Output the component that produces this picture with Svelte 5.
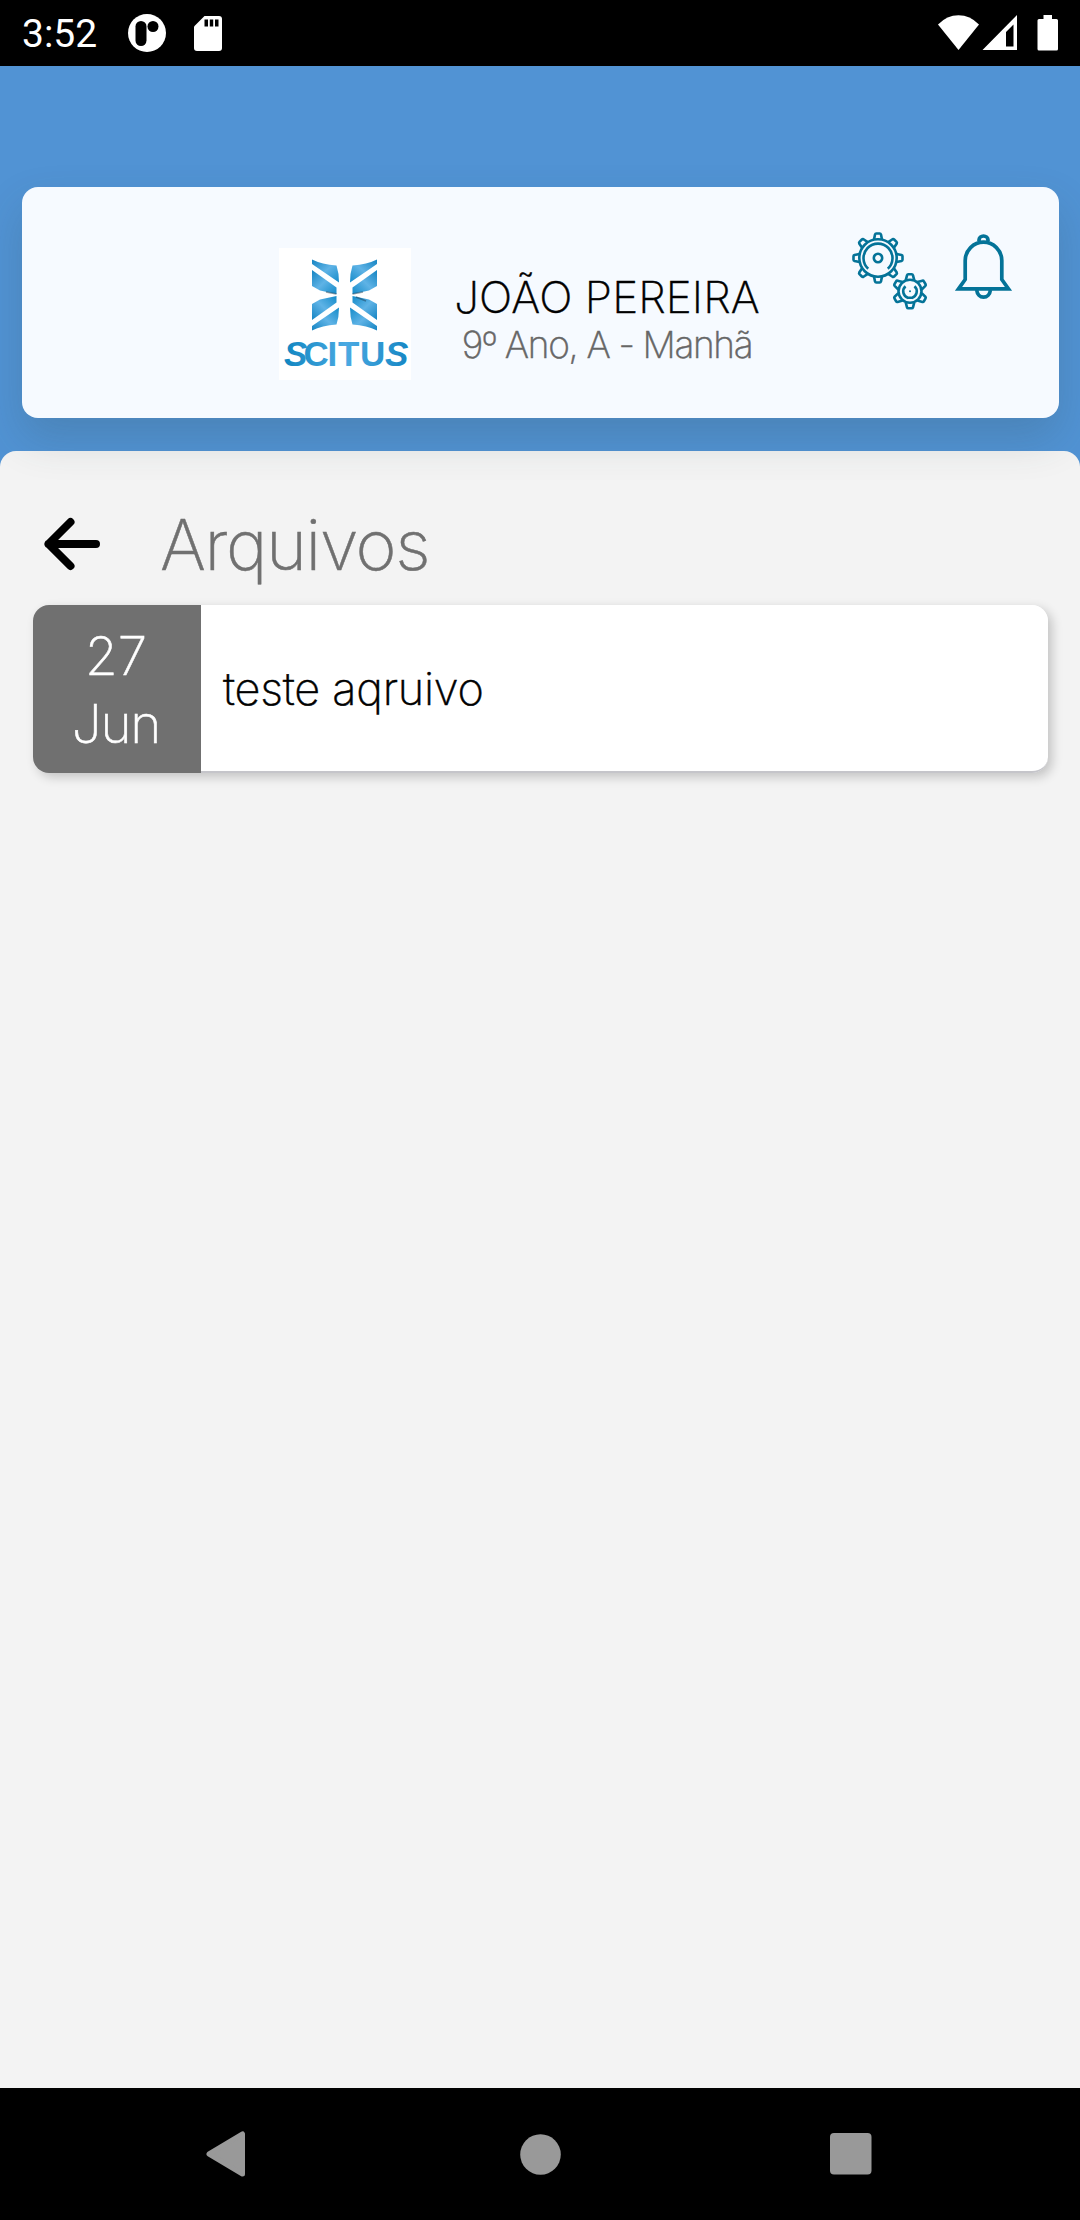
<script>
  const student = { name: 'JOÃO PEREIRA', group: '9º Ano, A - Manhã' };
  const files = [{ day: '27', month: 'Jun', title: 'teste aqruivo' }];
  const bigTeeth = [0, 45, 90, 135, 180, 225, 270, 315];
  const smallTeeth = [0, 60, 120, 180, 240, 300];
</script>

<div class="screen">
  <div class="status">
    <span class="clock">3:52</span>
    <svg class="app" width="38" height="38" viewBox="0 0 38 38">
      <circle cx="19" cy="19" r="19" fill="#fff" />
      <rect x="7.5" y="7" width="11" height="25" rx="5.5" />
      <circle cx="25" cy="12.5" r="5.5" />
    </svg>
    <svg class="sd" width="28" height="35" viewBox="0 0 28 35">
      <path d="M10.500 0H25a3 3 0 0 1 3 3V32a3 3 0 0 1-3 3H3a3 3 0 0 1-3-3V10.500Z" fill="#fff" />
      <path d="M10.500 3.500h3.500v7h-3.500zM15.800 3.500h3.400v7h-3.400zM21 3.500h3.500v7H21z" />
    </svg>
    <svg class="signals" width="122" height="36" viewBox="0 0 122 36" fill="#fff">
      <path d="M0 9.500Q9 .3 20.500 .3T41 9.500L20.500 35Z" />
      <path fill-rule="evenodd" d="M44.500 35 79 0V35ZM68 17V31.500H75.500V9.500Z" />
      <path d="M105.500 0h8.500v4h4.500a1.500 1.500 0 0 1 1.500 1.500V34a1.500 1.500 0 0 1-1.500 1.500H101a1.500 1.500 0 0 1-1.500-1.500V5.500A1.500 1.500 0 0 1 101 4h4.500z" />
    </svg>
  </div>

  <header>
    <section class="profile">
      <svg class="logo" width="132" height="132" viewBox="0 0 132 132">
        <defs>
          <linearGradient id="wing" x1="0" y1="0" x2="1" y2="1">
            <stop offset="0" stop-color="#1584c2" />
            <stop offset=".5" stop-color="#5fb3e6" />
            <stop offset="1" stop-color="#148bc9" />
          </linearGradient>
          <linearGradient id="word" x1="0" y1="0" x2="1" y2="0">
            <stop offset="0" stop-color="#1186c1" />
            <stop offset=".5" stop-color="#4aa9e2" />
            <stop offset="1" stop-color="#1687c4" />
          </linearGradient>
          <g id="wings">
            <path d="M33 11.500Q43 16.500 57.500 17.500Q60 25 60 34.500L33 16Z" />
            <path d="M33 22 57.500 39.500V46L41 42.500 33 38Z" />
          </g>
        </defs>
        <rect width="132" height="132" fill="#fff" />
        <g fill="url(#wing)">
          <use href="#wings" />
          <use href="#wings" transform="translate(131 0) scale(-1 1)" />
          <use href="#wings" transform="translate(0 94) scale(1 -1)" />
          <use href="#wings" transform="translate(131 94) scale(-1 -1)" />
        </g>
        <path d="M47 44 57.500 46M84 44 73.500 46M77 49 87 53" fill="none" stroke="#1c4057" stroke-width="1.500" opacity=".5" />
        <text class="word" x="5 24.500 48.500 59 81 106" y="118" fill="url(#word)"><tspan class="slant">S</tspan>CITU<tspan class="slant">S</tspan></text>
      </svg>

      <div class="who">
        <h2>{student.name}</h2>
        <p>{student.group}</p>
      </div>

      <svg class="tools" width="220" height="120" viewBox="0 0 220 120" fill="none" stroke="#047398" stroke-width="2.600">
        <g transform="translate(48 48)">
          <circle r="18.700" />
          <circle r="4.200" />
          <path d="M-9.800 10.800A14.500 14.500 0 1 1 9.800 10.800" />
          {#each bigTeeth as angle}
            <path transform={`rotate(${angle})`} d="M-4-18.500-3-23.500Q-2.700-24.500-1.700-24.500H1.700Q2.700-24.500 3-23.500L4-18.500" />
          {/each}
        </g>
        <g transform="translate(80 81.300)">
          <circle r="11.500" />
          <circle r="1" fill="#047398" stroke="none" />
          <path d="M-4.500-5A6.800 6.800 0 0 0-1.800 6.600M4.500-5A6.800 6.800 0 0 1 1.800 6.600M-2 6.500H2" />
          {#each smallTeeth as angle}
            <path transform={`rotate(${angle})`} d="M-4.300-11-3-16Q-2.700-17-1.700-17H1.700Q2.700-17 3-16L4.300-11" />
          {/each}
        </g>
        <g stroke-width="3.700">
          <path d="M128.500 78.800 135.200 69.500V50.500a18.300 18.300 0 0 1 36.600 0V69.500L178.500 78.800Z" />
          <path d="M149 31v-1a4.500 4 0 0 1 9 0v1" />
          <path d="M146.700 80a6.900 8.200 0 0 0 13.700 0" />
        </g>
      </svg>
    </section>
  </header>

  <main>
    <div class="heading">
      <svg class="back" width="58" height="56" viewBox="0 0 58 56" fill="none" stroke="#000" stroke-width="8" stroke-linecap="round" stroke-linejoin="round">
        <path d="M27.500 6 5.500 28 27.500 50M5.500 28H53" />
      </svg>
      <h1>Arquivos</h1>
    </div>
    {#each files as file}
      <article>
        <div class="date"><span>{file.day}</span><span class="month">{file.month}</span></div>
        <div class="title"><span>{file.title}</span></div>
      </article>
    {/each}
  </main>

  <nav>
    <svg width="40" height="46" viewBox="0 0 40 46"><path d="M3 23 36.500 3V43Z" stroke-width="5" stroke-linejoin="round" /></svg>
    <svg class="home" width="41" height="41" viewBox="0 0 41 41"><circle cx="20.500" cy="20.500" r="20.300" /></svg>
    <svg width="42" height="42" viewBox="0 0 42 42"><rect width="41.500" height="41.500" rx="4" /></svg>
  </nav>
</div>

<style>
  .screen {
    width: 1080px;
    height: 2220px;
    display: flex;
    flex-direction: column;
    background: #5193d4;
    font-family: Inter, 'Liberation Sans', sans-serif;
    font-weight: 200;
    overflow: hidden;
  }
  svg { display: block; flex: none; }
  h1, h2, p { margin: 0; font-weight: inherit; white-space: nowrap; }
  h1, h2, p, article { -webkit-text-stroke: .5px currentColor; }
  .status {
    height: 66px;
    box-sizing: border-box;
    padding: 0 22px;
    display: flex;
    align-items: center;
    background: #000;
    color: #fff;
  }
  .clock { width: 105.500px; font: 400 39px/66px Roboto, sans-serif; padding-top: 2px; }
  .sd { margin-left: 28px; }
  .signals { margin-left: auto; margin-right: -2px; }
  header { padding: 121px 21px 33px 22px; position: relative; z-index: 1; }
  .profile {
    height: 231px;
    box-sizing: border-box;
    padding-left: 257px;
    display: flex;
    align-items: flex-start;
    background: #f6faff;
    border-radius: 16px;
    box-shadow: 0 20px 44px rgba(50, 70, 70, .2);
  }
  .logo { margin-top: 61px; overflow: visible; }
  .word { font: 700 35px 'Liberation Sans Narrow', 'Liberation Sans', sans-serif; }
  .slant { font-style: italic; }
  .who { width: 392px; padding-top: 85px; text-align: center; }
  .who h2 { font-size: 44px; line-height: 50px; letter-spacing: .1px; color: #000; }
  .who p { font-size: 37px; line-height: 46px; letter-spacing: -1.350px; color: #666; }
  .tools { margin: 23px 0 0 27px; }
  main {
    flex: 1;
    padding: 0 32px 0 33px;
    background: #f3f3f3;
    border-radius: 16px 16px 0 0;
  }
  .heading { height: 154px; display: flex; align-items: flex-start; color: #707070; }
  .back { margin: 65px 0 0 10px; }
  h1 { margin: 50px 0 0 59px; font-size: 70px; line-height: 87px; letter-spacing: -1.400px; }
  article {
    height: 168px;
    display: flex;
    border-radius: 16px;
    box-shadow: 4px 4px 11px rgba(0, 0, 0, .2);
  }
  .date {
    width: 168px;
    display: flex;
    flex-direction: column;
    align-items: center;
    background: #707070;
    color: #fff;
    border-radius: 16px 0 0 16px;
    font-size: 53px;
    line-height: 68px;
    padding: 17px 2px 0 0;
    box-sizing: border-box;
  }
  .month { letter-spacing: -1.200px; }
  .title {
    flex: 1;
    box-sizing: border-box;
    padding: 52px 0 0 22px;
    background: #fff;
    border-bottom: 2px solid #c5c5ca;
    border-radius: 0 16px 16px 0;
    font-size: 45px;
    line-height: 64px;
    letter-spacing: -.250px;
    color: #000;
  }
  nav {
    height: 132px;
    box-sizing: border-box;
    padding: 0 208px 0 206px;
    display: flex;
    align-items: center;
    justify-content: space-between;
    background: #000;
    fill: #999;
    stroke: #999;
    stroke-width: 0;
  }
  .home { margin-left: 4px; }
</style>
